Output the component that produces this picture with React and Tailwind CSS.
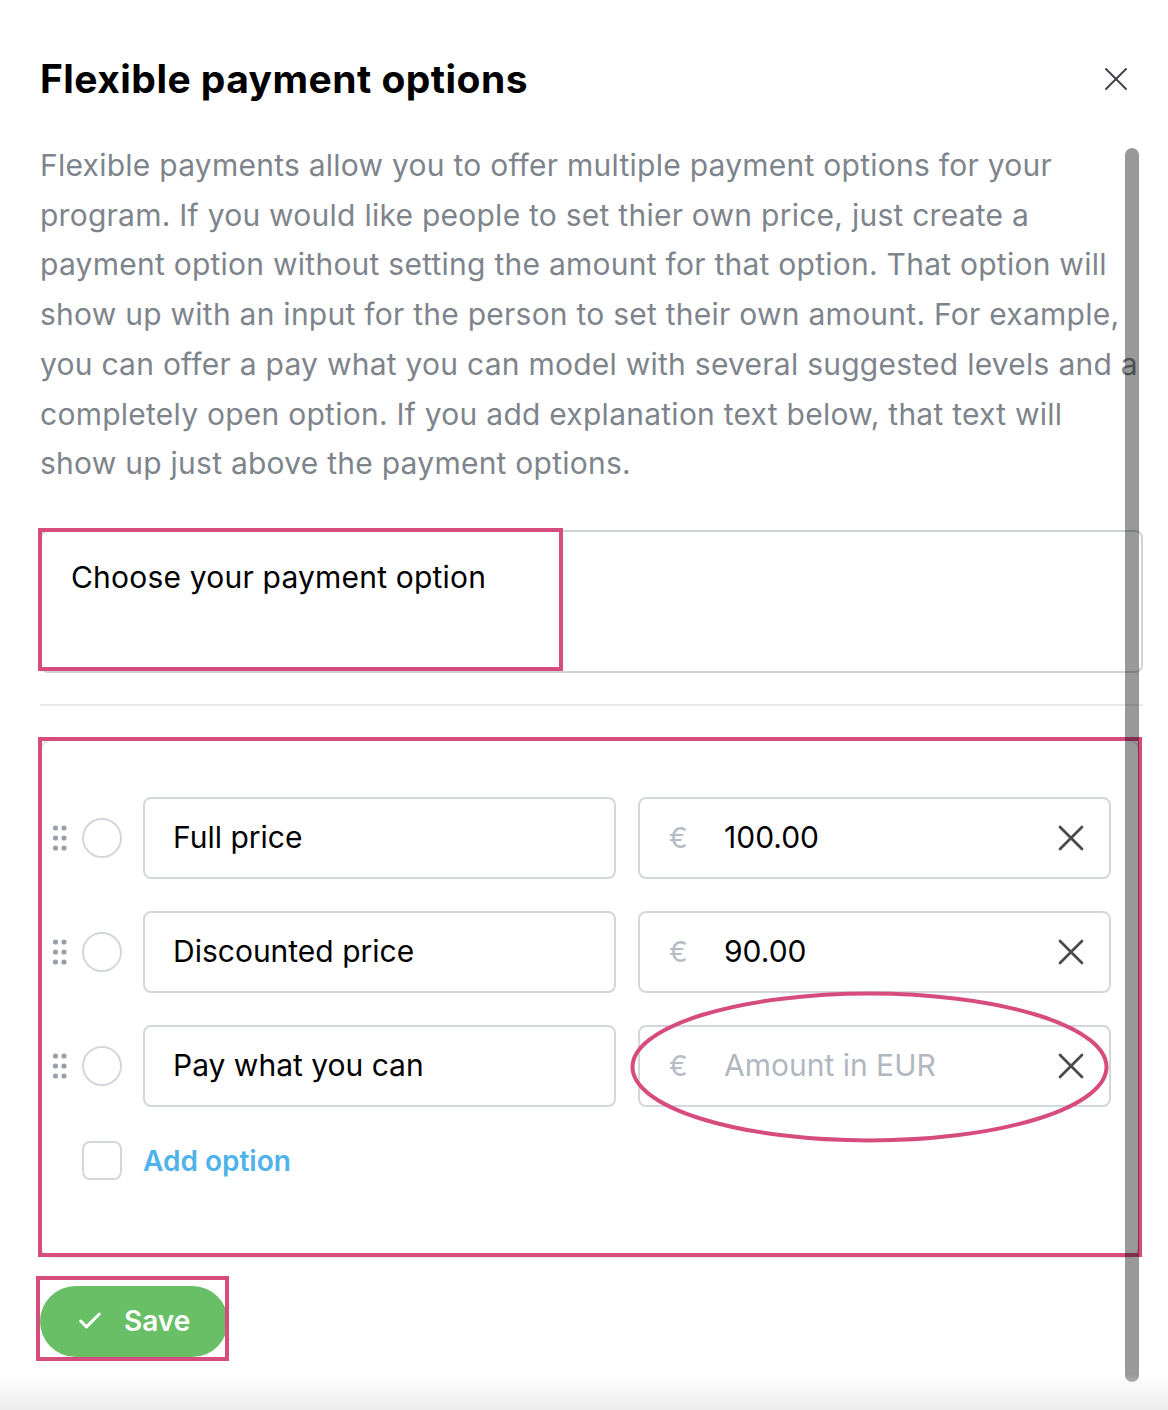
import React from "react";
import { X, Check } from "lucide-react";

const intro = [
  "Flexible payments allow you to offer multiple payment options for your",
  "program. If you would like people to set thier own price, just create a",
  "payment option without setting the amount for that option. That option will",
  "show up with an input for the person to set their own amount. For example,",
  "you can offer a pay what you can model with several suggested levels and a",
  "completely open option. If you add explanation text below, that text will",
  "show up just above the payment options.",
];

const options = [
  { id: "full", label: "Full price", amount: "100.00" },
  { id: "discount", label: "Discounted price", amount: "90.00" },
  { id: "pwyc", label: "Pay what you can", amount: "", circled: true },
];

// marcas rosas de la captura (anotaciones encima del contenido)
function Highlight({ className }) {
  return (
    <div
      className={`pointer-events-none absolute border-[4px] border-[#d64d7d] ${className}`}
    />
  );
}

function DragHandle() {
  return (
    <svg width="16" height="26" viewBox="0 0 16 26" className="shrink-0">
      {[3, 13, 23].map((cy) =>
        [3.5, 12].map((cx) => (
          <circle key={`${cx}-${cy}`} cx={cx} cy={cy} r="2.6" fill="#9aa0a8" />
        ))
      )}
    </svg>
  );
}

function OptionRow({ option }) {
  return (
    <div className="flex items-center">
      <DragHandle />
      <div className="ml-[14px] h-[40px] w-[40px] shrink-0 rounded-full border-2 border-[#d3d7dc]" />
      <div className="ml-[21px] grid flex-1 grid-cols-2 gap-[22px]">
        <div className="flex h-[82px] items-center rounded-lg border-2 border-[#d3d7dc] px-[28px] text-[30px] text-black">
          {option.label}
        </div>
        <div className="relative flex h-[82px] items-center rounded-lg border-2 border-[#d3d7dc] pl-[29px] pr-[16px]">
          <span className="w-[55px] text-[28px] text-[#b6bcc4]">€</span>
          <span
            className={`flex-1 text-[30px] ${option.amount ? "text-black" : "text-[#b1b7bf]"}`}
          >
            {option.amount || "Amount in EUR"}
          </span>
          <X className="h-[44px] w-[44px] text-[#464b51]" strokeWidth={1.5} />
          {option.circled && (
            <svg
              className="pointer-events-none absolute -left-[10px] -top-[36px]"
              width="479"
              height="152"
              viewBox="0 0 479 152"
            >
              <ellipse
                cx="239.5"
                cy="76"
                rx="237"
                ry="73.5"
                fill="none"
                stroke="#d64d7d"
                strokeWidth="4"
              />
            </svg>
          )}
        </div>
      </div>
    </div>
  );
}

export default function App() {
  return (
    <div
      className="relative h-[1410px] w-full overflow-hidden bg-white pl-[40px] pr-[25px]"
      style={{ fontFamily: "Inter, 'Noto Sans', sans-serif" }}
    >
      <div className="flex items-center justify-between pt-[56px] pr-[7px]">
        <h1 className="text-[39px] font-bold leading-[46px] tracking-[0.45px] text-black">
          Flexible payment options
        </h1>
        <X className="h-[40px] w-[40px] text-[#3f444a]" strokeWidth={1.2} />
      </div>

      <p className="mt-[39px] text-[30px] leading-[49.7px] tracking-[0.25px] text-[#7e848c]">
        {intro.map((line) => (
          <span key={line} className="block whitespace-nowrap">
            {line}
          </span>
        ))}
      </p>

      <div className="relative mt-[41px]">
        <div className="h-[143px] rounded-lg border-2 border-[#cfd4d9] px-[29px] pt-[25px] text-[30px] leading-[40px] tracking-[0.2px] text-black">
          Choose your payment option
        </div>
        <Highlight className="-left-[2px] -top-[2px] h-[143px] w-[525px]" />
      </div>

      <div className="mt-[31px] h-[2px] bg-[#e8e9ed]" />

      <div className="relative mt-[33px] mr-[3px]">
        <div className="rounded-xl border-2 border-[#e5e7eb] pb-[74px] pl-[10px] pr-[27px] pt-[56px]">
          <div className="flex flex-col gap-[32px]">
            {options.map((o) => (
              <OptionRow key={o.id} option={o} />
            ))}
          </div>
          <div className="mt-[33px] flex items-center pl-[30px]">
            <div className="h-[39px] w-[40px] rounded-lg border-2 border-[#d3d7dc]" />
            <span className="ml-[21px] text-[28px] font-semibold text-[#4fb2ea]">
              Add option
            </span>
          </div>
        </div>
        <Highlight className="-left-[2px] -top-[2px] h-[520px] w-[1104px]" />
      </div>

      <div className="relative mt-[28px] w-fit">
        <button className="flex h-[71px] items-center gap-[20px] rounded-full bg-[#68bf66] pl-[36px] pr-[38px] text-[28px] font-semibold text-white">
          <Check className="h-[28px] w-[28px]" strokeWidth={2.6} />
          Save
        </button>
        <Highlight className="-left-[4px] -top-[10px] h-[85px] w-[193px]" />
      </div>

      {/* barra de scroll superpuesta */}
      <div className="absolute left-[1125px] top-[148px] h-[1234px] w-[14px] rounded-full bg-black/40" />

      <div className="pointer-events-none absolute bottom-0 left-0 h-[36px] w-full bg-gradient-to-b from-white/0 to-[#ededed]" />
    </div>
  );
}
